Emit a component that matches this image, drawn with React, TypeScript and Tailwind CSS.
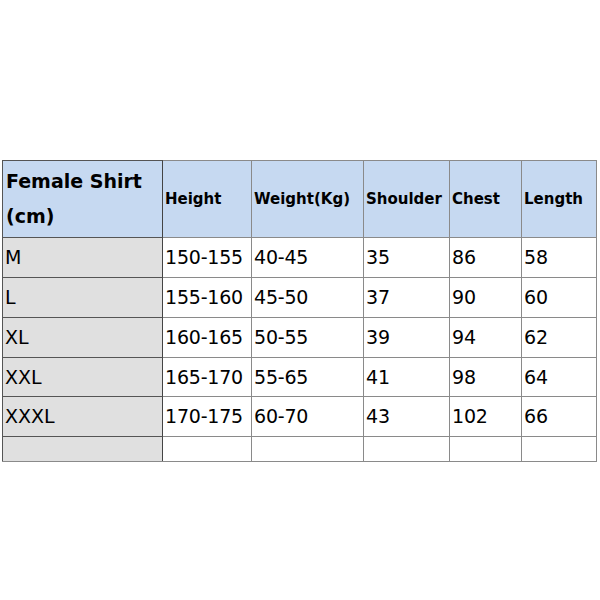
import React from "react";

const cols = ["w-[161px]", "w-[88px]", "w-[112px]", "w-[86px]", "w-[72px]", "w-[75px]"];
const rows: string[][] = [
  ["M", "150-155", "40-45", "35", "86", "58"],
  ["L", "155-160", "45-50", "37", "90", "60"],
  ["XL", "160-165", "50-55", "39", "94", "62"],
  ["XXL", "165-170", "55-65", "41", "98", "64"],
  ["XXXL", "170-175", "60-70", "43", "102", "66"],
  ["", "", "", "", "", ""],
];
const rowH = ["h-[40px]", "h-[40px]", "h-[40px]", "h-[39px]", "h-[40px]", "h-[25px]"];
const headers = ["Height", "Weight(Kg)", "Shoulder", "Chest", "Length"];

export default function App() {
  return (
    <div className="w-[600px] h-[600px] bg-white pt-[160px] pl-[2px]" style={{ fontFamily: '"DejaVu Sans", Verdana, sans-serif' }}>
      <div className="inline-flex flex-col border-r border-b border-[#8a8a8a] text-black">
        <div className="flex h-[77px]">
          <div className={`${cols[0]} border-l border-t border-r border-[#555] border-r-[#444] bg-[#c6d9f1] pl-[3px] flex flex-col justify-center font-bold text-[19px] leading-[35px]`}>
            <span>Female Shirt</span>
            <span>(cm)</span>
          </div>
          {headers.map((h, i) => (
            <div key={h} className={`${cols[i + 1]} ${i === 0 ? "w-[87px]" : ""} border-l border-t border-[#8a8a8a] ${i === 0 ? "border-l-0" : ""} bg-[#c6d9f1] pl-[2px] flex items-center font-bold text-[15px]`}>
              {h}
            </div>
          ))}
        </div>
        {rows.map((r, ri) => (
          <div key={ri} className={`flex ${rowH[ri]}`}>
            <div className={`${cols[0]} border-l border-t border-r border-[#555] border-r-[#444] bg-[#e0e0e0] pl-[2px] flex items-center text-[19px]`}>
              {r[0]}
            </div>
            {r.slice(1).map((c, ci) => (
              <div key={ci} className={`${cols[ci + 1]} ${ci === 0 ? "w-[87px] border-l-0" : "border-l"} border-t border-[#8a8a8a] pl-[2px] flex items-center text-[19px] tracking-[-0.2px]`}>
                {c}
              </div>
            ))}
          </div>
        ))}
      </div>
    </div>
  );
}
